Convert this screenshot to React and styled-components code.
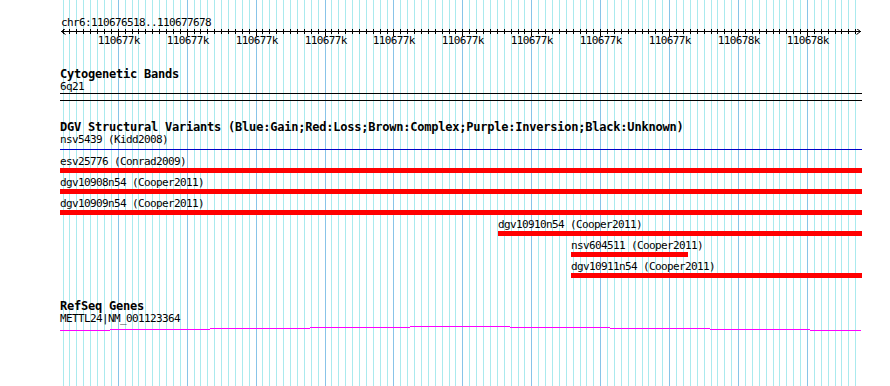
import React from "react";
import styled, { createGlobalStyle } from "styled-components";

const START = 110676518;
const END = 110677678;
const ORIGIN = 61.2;
const SCALE = 0.6893;
const xOf = (bp) => ORIGIN + (bp - START) * SCALE;

const GlobalStyle = createGlobalStyle`
  html, body { margin: 0; padding: 0; background: #ffffff; }
  #root { width: 890px; height: 386px; }
`;

const Page = styled.div`
  position: relative;
  width: 890px;
  height: 386px;
  overflow: hidden;
  background: #ffffff;
  font-family: "DejaVu Sans Mono", "Liberation Mono", monospace;
  color: #000;
`;

const Backdrop = styled.svg`
  position: absolute;
  left: 0;
  top: 0;
  z-index: 0;
  display: block;
`;

const Content = styled.div`
  position: relative;
  z-index: 1;
  display: flex;
  flex-direction: column;
`;

const Location = styled.div`
  padding: 16px 0 0 61px;
  font-size: 11px;
  line-height: 13px;
  letter-spacing: -0.62px;
  white-space: nowrap;
`;

const RulerSvg = styled.svg`
  display: block;
  font-family: "DejaVu Sans Mono", "Liberation Mono", monospace;
  font-size: 11px;
  letter-spacing: -0.62px;
`;

const Track = styled.section`
  display: flex;
  flex-direction: column;
  margin-top: ${(p) => p.$gap}px;
`;

const TrackTitle = styled.div`
  padding-left: 60px;
  font-size: 12px;
  font-weight: bold;
  line-height: 11px;
  letter-spacing: -0.22px;
  white-space: nowrap;
`;

const Label = styled.div`
  font-size: 11px;
  line-height: 13px;
  letter-spacing: -0.62px;
  white-space: nowrap;
`;

const TrackLabel = styled(Label)`
  padding-left: 60px;
`;

const BandBox = styled.div`
  box-sizing: border-box;
  margin-left: 60px;
  width: 802px;
  height: 8px;
  border-top: 1px solid #000;
  border-bottom: 1px solid #000;
`;

const Features = styled.div`
  display: flex;
  flex-direction: column;
  margin-top: ${(p) => p.$gap}px;
`;

const FeatureRow = styled.div`
  display: flex;
  flex-direction: column;
  align-items: flex-start;
  margin-bottom: 3px;
`;

const Bar = styled.div`
  height: 5px;
  background: #ff0000;
`;

const ThinLine = styled.div`
  margin: 3px 0 0 60px;
  width: 802px;
  height: 1px;
  background: #0000c8;
`;

const GeneSvg = styled.svg`
  display: block;
`;

const features = [
  { label: "esv25776 (Conrad2009)", start: 60, end: 862 },
  { label: "dgv10908n54 (Cooper2011)", start: 60, end: 862 },
  { label: "dgv10909n54 (Cooper2011)", start: 60, end: 862 },
  { label: "dgv10910n54 (Cooper2011)", start: 498, end: 862 },
  { label: "nsv604511 (Cooper2011)", start: 571, end: 688 },
  { label: "dgv10911n54 (Cooper2011)", start: 571, end: 862 },
];

const geneSteps = [
  [60, 110, 5],
  [110, 210, 4],
  [210, 310, 3],
  [310, 410, 2],
  [410, 510, 1],
  [510, 610, 2],
  [610, 710, 3],
  [710, 810, 4],
  [810, 861, 5],
];

const gridLines = [];
for (let bp = 110676520; bp <= END; bp += 10) {
  gridLines.push({ x: Math.round(xOf(bp)), major: bp % 100 === 0, bp });
}

const fmtK = (bp) => `${Math.round(bp / 1000)}k`;

function Grid() {
  return (
    <Backdrop width="890" height="386" viewBox="0 0 890 386">
      {gridLines.map((g) => (
        <rect
          key={g.bp}
          x={g.x}
          y="0"
          width="1"
          height="386"
          fill={g.major ? "#88c4e8" : "#aaeaee"}
        />
      ))}
    </Backdrop>
  );
}

function Ruler() {
  const y = 2;
  return (
    <RulerSvg width="890" height="20" viewBox="0 0 890 20">
      <rect x="61" y={y} width="800" height="1" fill="#000" />
      <path
        d={`M65.5 ${y - 2.5} L61.5 ${y + 0.5} L65.5 ${y + 3.5} M856.5 ${y - 2.5} L860.5 ${y + 0.5} L856.5 ${y + 3.5}`}
        stroke="#000"
        strokeWidth="1"
        fill="none"
      />
      {gridLines.map((g) => (
        <rect
          key={g.bp}
          x={g.x}
          y={y - 2}
          width="1"
          height={g.major ? 7 : 5}
          fill="#000"
        />
      ))}
      {gridLines
        .filter((g) => g.major)
        .map((g) => (
          <text key={g.bp} x={g.x + 0.8} y="15.3" textAnchor="middle" fill="#000">
            {fmtK(g.bp)}
          </text>
        ))}
    </RulerSvg>
  );
}

export default function App() {
  return (
    <>
      <GlobalStyle />
      <Page>
        <Grid />
        <Content>
          <Location>
            chr6:{START}..{END}
          </Location>
          <Ruler />

          <Track $gap={20}>
            <TrackTitle>Cytogenetic Bands</TrackTitle>
            <TrackLabel>6q21</TrackLabel>
            <BandBox />
          </Track>

          <Track $gap={21}>
            <TrackTitle>
              DGV Structural Variants (Blue:Gain;Red:Loss;Brown:Complex;Purple:Inversion;Black:Unknown)
            </TrackTitle>
            <TrackLabel>nsv5439 (Kidd2008)</TrackLabel>
            <ThinLine />
            <Features $gap={5}>
              {features.map((f) => (
                <FeatureRow key={f.label} style={{ paddingLeft: f.start }}>
                  <Label>{f.label}</Label>
                  <Bar style={{ width: f.end - f.start }} />
                </FeatureRow>
              ))}
            </Features>
          </Track>

          <Track $gap={20}>
            <TrackTitle>RefSeq Genes</TrackTitle>
            <TrackLabel>METTL24|NM_001123364</TrackLabel>
            <GeneSvg width="890" height="7" viewBox="0 0 890 7">
              {geneSteps.map(([x0, x1, yy]) => (
                <rect key={x0} x={x0} y={yy} width={x1 - x0} height="1" fill="#ff00ff" />
              ))}
            </GeneSvg>
          </Track>
        </Content>
      </Page>
    </>
  );
}
